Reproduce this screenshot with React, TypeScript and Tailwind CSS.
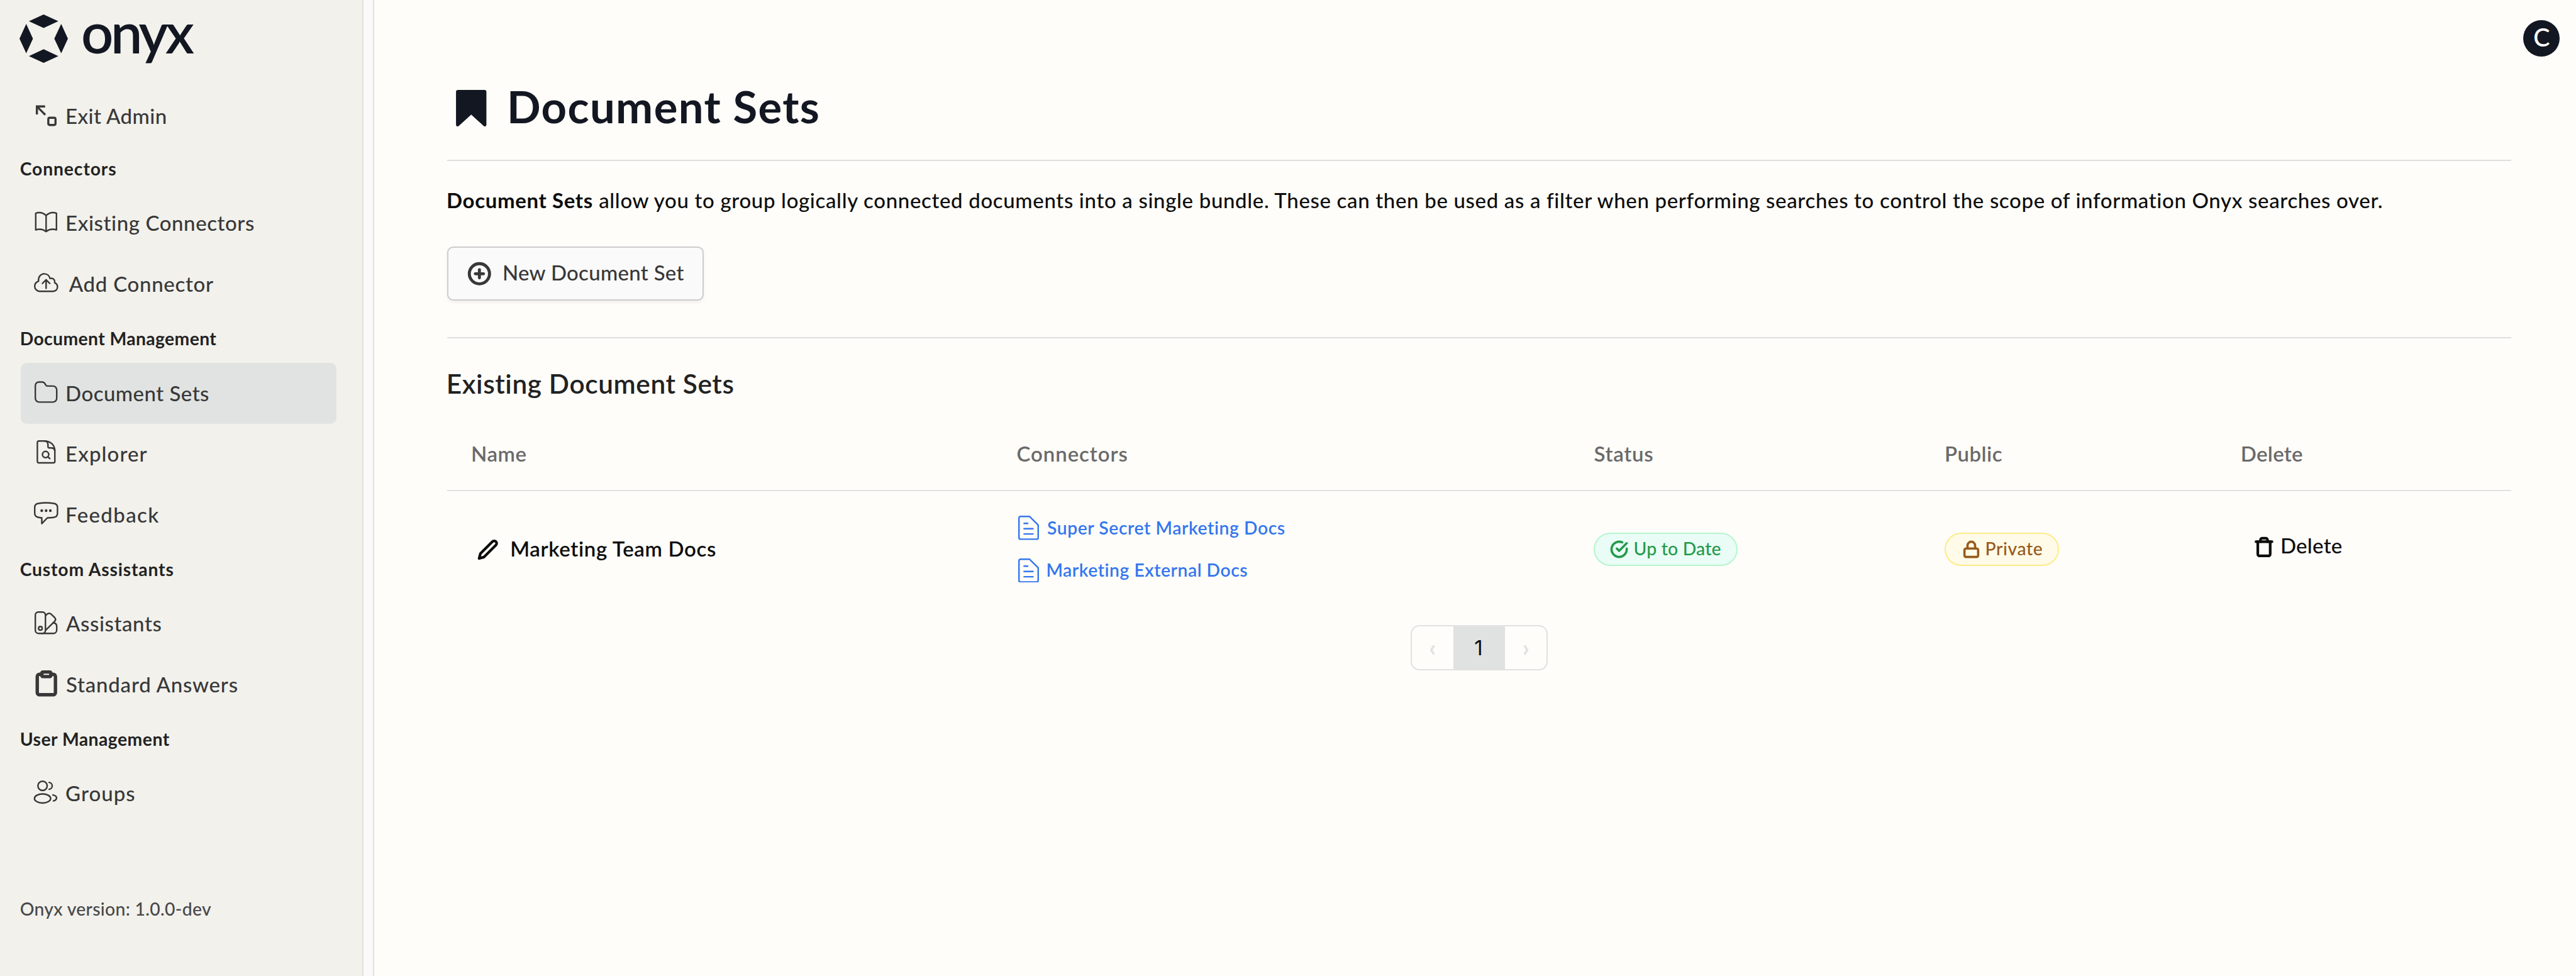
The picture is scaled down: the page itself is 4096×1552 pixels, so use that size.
import React from "react";
import { FiCheckCircle, FiClipboard, FiEdit2, FiLock, FiPlusCircle, FiTrash } from "react-icons/fi";

function LineIcon({ children, stroke = 3 }: { children: React.ReactNode; stroke?: number }) {
  return (
    <svg
      viewBox="0 0 48 48"
      fill="none"
      stroke="currentColor"
      strokeWidth={stroke}
      strokeLinecap="round"
      strokeLinejoin="round"
      className="mb-[4.8px] h-[38.6px] w-[38.6px] shrink-0 overflow-visible"
    >
      {children}
    </svg>
  );
}

const ExitIcon = () => (
  <LineIcon stroke={4.2}>
    <path d="M22 7.8H5.8V23.7M6.3 8.3L21.5 23.5" strokeLinecap="butt" strokeLinejoin="miter" />
    <path d="M20.5 22.5L21.2 23.2" />
    <rect x="28.4" y="30.2" width="14.2" height="14.2" rx="2.6" />
  </LineIcon>
);

const BookIcon = () => (
  <LineIcon>
    <path d="M3.5 6.4C10 3.9 18 5.4 24 10.8C30 5.4 38 3.9 44.5 6.4V39.3C37 36.8 30 38 24 42.5C18 38 11 36.8 3.5 39.3ZM24 11V42" />
  </LineIcon>
);

const CloudIcon = () => (
  <LineIcon>
    <path d="M11.5 41.3A10 10 0 0 1 1.5 31.3C1.5 27 4.5 22.8 9 21.2C8.2 13 13 6.7 20.3 6.7C26.5 6.7 30.7 11 31.7 16C37 14 41.5 18 41 24.3C45 26 46.5 29 46.5 32.5C46.5 37.5 43 41.3 38 41.3Z" />
    <path d="M24 35.5V18.6M16.7 25.8L24 18.5L31.3 25.8" />
  </LineIcon>
);

const FolderIcon = () => (
  <LineIcon>
    <path d="M9.7 4.3H16.5C19 4.3 20.5 5.5 22 8L23.2 10.2C24 11.8 25 12.3 27 12.3H37.5A7.5 7.5 0 0 1 45 19.8V36.5A7.5 7.5 0 0 1 37.5 44H10.2A7.5 7.5 0 0 1 2.7 36.5V11.3A7 7 0 0 1 9.7 4.3Z" />
  </LineIcon>
);

const ExplorerIcon = () => (
  <LineIcon>
    <path d="M22 1.5H9.5A2.8 2.8 0 0 0 6.7 4.3V41.9A2.8 2.8 0 0 0 9.5 44.7H38.5A2.8 2.8 0 0 0 41.3 41.9V21.5C41.3 9.5 33 1.5 20 1.5" />
    <path d="M22 1.7C26 2.5 27.7 5 27.7 9V12.5A2.8 2.8 0 0 0 30.5 15.3H34C37.5 15.3 40.5 17 41.2 21" />
    <circle cx="23" cy="28.3" r="6.2" />
    <path d="M27.6 32.8L31.4 36.4" />
  </LineIcon>
);

const FeedbackIcon = () => (
  <LineIcon>
    <path d="M9 4.3C19 2.7 29 2.7 39 4.3C43.5 5 46.5 8 46.5 12V24C46.5 28.5 43.5 31.5 39 32C34.5 32.6 30 32.9 26.5 33L15.5 44.3V32.8C13 32.6 11 32.3 9 32C4.5 31.3 1.5 28.5 1.5 24V12C1.5 8 4.5 5 9 4.3Z" />
    <g fill="currentColor" stroke="none">
      <circle cx="15.4" cy="18.7" r="2.7" />
      <circle cx="24" cy="18.7" r="2.7" />
      <circle cx="32.4" cy="18.7" r="2.7" />
    </g>
  </LineIcon>
);

const SwatchIcon = () => (
  <LineIcon>
    <rect x="2.7" y="2.7" width="20" height="42.3" rx="6" />
    <circle cx="12.7" cy="35" r="3.6" />
    <path d="M23 9.7L26 6.8C28.5 4.8 31.5 4.8 34 7L40.5 13.3C43 15.8 43 19 40.8 21.3L22.8 39" />
    <path d="M38 24.3C42.5 24.6 45 27.5 45 31V38.5A6.5 6.5 0 0 1 38.5 45H16" />
  </LineIcon>
);

const GroupsIcon = () => (
  <LineIcon>
    <circle cx="17" cy="10.7" r="9.2" />
    <ellipse cx="17" cy="35.7" rx="16" ry="9" />
    <path d="M30 3.9A6.9 6.9 0 0 1 30 17.6" />
    <path d="M37.5 28.7C42 29.7 44.7 32 44.7 34.5C44.7 37.2 42.3 39.5 38.5 40.5" />
  </LineIcon>
);

const ClipboardIcon = () => (
  <FiClipboard strokeWidth={3} className="-mx-[2.4px] mb-[4.8px] h-[43.4px] w-[43.4px] shrink-0" />
);

function NavItem({
  icon,
  label,
  tracking,
  gap = "gap-[11.6px]",
  active = false,
}: {
  icon: React.ReactNode;
  label: string;
  tracking: string;
  gap?: string;
  active?: boolean;
}) {
  return (
    <div
      className={`ml-[33px] flex h-[96.5px] w-[501.7px] items-center rounded-[9.6px] pl-[20.9px] ${gap} ${
        active ? "bg-[#e1e3e2]" : ""
      }`}
    >
      {icon}
      <span className={`mb-[1.2px] text-[33px] leading-none font-medium ${tracking}`}>{label}</span>
    </div>
  );
}

function NavHeading({ label, tracking, height = "h-[77.2px]" }: { label: string; tracking: string; height?: string }) {
  return (
    <div className={`flex items-end pb-[24.9px] pl-[31.7px] text-[28.3px] leading-none font-bold text-[#222222] ${tracking} ${height}`}>
      {label}
    </div>
  );
}

function Sidebar() {
  return (
    <aside className="flex w-[576px] shrink-0 flex-col bg-[#f2f1ec] text-[#383838]">
      <div className="flex h-[136.7px] items-start pl-[30.6px] text-[#131722]">
        <svg viewBox="0 0 288 288" fill="currentColor" className="mt-[22.5px] h-[77px] w-[77px]">
          <path d="M143.5 0L231 40L143.5 80L56 40ZM143.5 207L231 248L143.5 288L56 248ZM40 56L80 144L40 231L0 144ZM248 56L288 144L248 231L207 144Z" />
        </svg>
        <span className="-mt-[4.2px] ml-[21.5px] text-[90px] leading-[108px] font-semibold tracking-[-0.051em]">onyx</span>
      </div>
      <NavItem icon={<ExitIcon />} label="Exit Admin" tracking="tracking-[0.0127em]" />
      <NavHeading label="Connectors" tracking="tracking-[0.0316em]" height="h-[74px]" />
      <NavItem icon={<BookIcon />} label="Existing Connectors" tracking="tracking-[0.0178em]" />
      <NavItem icon={<CloudIcon />} label="Add Connector" tracking="tracking-[0.0213em]" gap="gap-[17.3px]" />
      <NavHeading label="Document Management" tracking="tracking-[0.0139em]" />
      <NavItem icon={<FolderIcon />} label="Document Sets" tracking="tracking-[0.0144em]" active />
      <NavItem icon={<ExplorerIcon />} label="Explorer" tracking="tracking-[0.0331em]" />
      <NavItem icon={<FeedbackIcon />} label="Feedback" tracking="tracking-[0.0414em]" />
      <NavHeading label="Custom Assistants" tracking="tracking-[0.0292em]" />
      <NavItem icon={<SwatchIcon />} label="Assistants" tracking="tracking-[0.0178em]" gap="gap-[12.5px]" />
      <NavItem icon={<ClipboardIcon />} label="Standard Answers" tracking="tracking-[0.0235em]" gap="gap-[12.6px]" />
      <NavHeading label="User Management" tracking="tracking-[0.017em]" />
      <NavItem icon={<GroupsIcon />} label="Groups" tracking="tracking-[0.031em]" />
      <div className="mt-auto pb-[92.4px] pl-[31.7px] text-[28.3px] leading-none font-medium tracking-[0.0117em] text-[#484848]">
        Onyx version: 1.0.0-dev
      </div>
    </aside>
  );
}

const tableColumns = "grid grid-cols-[867.5px_918px_557.5px_470.8px_1fr]";

const headers = [
  { label: "Name", tracking: "tracking-[0.0175em]" },
  { label: "Connectors", tracking: "tracking-[0.028em]" },
  { label: "Status", tracking: "tracking-[0.0207em]" },
  { label: "Public", tracking: "tracking-[0.0144em]" },
  { label: "Delete", tracking: "tracking-[0.0094em]" },
];

function ConnectorLink({ label, tracking, gap }: { label: string; tracking: string; gap: string }) {
  return (
    <a className={`flex h-[38.6px] items-center text-[#3576ee] ${gap}`}>
      <svg
        viewBox="0 0 41 48"
        fill="none"
        stroke="currentColor"
        strokeWidth="3"
        strokeLinejoin="round"
        strokeLinecap="round"
        className="h-[38.6px] w-[33px]"
      >
        <path d="M4.5 1.5H22.2L39.5 18.5V43.5A3 3 0 0 1 36.5 46.5H4.5A3 3 0 0 1 1.5 43.5V4.5A3 3 0 0 1 4.5 1.5Z" />
        <path d="M11.6 15.3H18.8M11.6 25.8H29.2M11.6 36.2H29.2" />
      </svg>
      <span className={`mb-[1.2px] text-[28.3px] leading-none font-semibold ${tracking}`}>{label}</span>
    </a>
  );
}

function DocumentSetTable() {
  return (
    <div className="mt-[73.6px]">
      <div className={`${tableColumns} border-b-2 border-[#e1e2e6] pb-[41.3px] text-[33px] leading-none font-semibold text-[#6a6a6a]`}>
        {headers.map((h) => (
          <div key={h.label} className={`pl-[38px] ${h.tracking}`}>
            {h.label}
          </div>
        ))}
      </div>
      <div className={`${tableColumns} h-[184.4px] items-center text-[#0d0d0d]`}>
        <div className="flex items-center gap-[18.1px] pl-[48.3px]">
          <FiEdit2 strokeWidth={3} className="mt-[1px] h-[33.8px] w-[33.8px]" />
          <span className="mb-[1.6px] text-[33px] leading-none font-semibold tracking-[0.0196em]">Marketing Team Docs</span>
        </div>
        <div className="flex flex-col gap-[29px] pl-[40.5px]">
          <ConnectorLink label="Super Secret Marketing Docs" tracking="tracking-[0.0201em]" gap="gap-[13px]" />
          <ConnectorLink label="Marketing External Docs" tracking="tracking-[0.0185em]" gap="gap-[11.4px]" />
        </div>
        <div className="pl-[37.2px]">
          <div className="flex h-[53px] w-[229.7px] items-center gap-[8.4px] rounded-full border-2 border-[#b6f5cf] bg-[#e9fcf5] pl-[24.5px] text-[#239a4b]">
            <FiCheckCircle strokeWidth={3} className="h-[29px] w-[29px]" />
            <span className="mb-[1.2px] text-[28.3px] leading-none font-medium tracking-[0.007em]">Up to Date</span>
          </div>
        </div>
        <div className="pl-[38.3px]">
          <div className="flex h-[53px] w-[182.2px] items-center gap-[7.8px] rounded-full border-2 border-[#feec86] bg-[#fffbe8] pl-[25.5px] text-[#985a1b]">
            <FiLock strokeWidth={3} className="h-[29px] w-[29px]" />
            <span className="mb-[1.2px] text-[28.3px] leading-none font-medium tracking-[0.0206em]">Private</span>
          </div>
        </div>
        <div className="flex items-center gap-[9.1px] pl-[58.2px]">
          <FiTrash strokeWidth={3} className="mb-[7.4px] h-[33.8px] w-[33.8px]" />
          <span className="mb-[11.4px] text-[33px] leading-none font-medium tracking-[0.0093em]">Delete</span>
        </div>
      </div>
    </div>
  );
}

function Pagination() {
  return (
    <div className="mt-[28.5px] flex h-[72.4px] w-[218.7px] self-center overflow-hidden rounded-[14px] border-2 border-[#e0e2e1]">
      <span className="flex flex-1 items-center justify-center pb-[3px] text-[38px] leading-none font-bold text-[#e0e2e1]">‹</span>
      <span className="flex w-[82px] items-center justify-center bg-[#e0e2e1] pr-[2px] font-['Inter',sans-serif] text-[33px] leading-none text-[#0d0d0d]">
        1
      </span>
      <span className="flex flex-1 items-center justify-center pb-[3px] text-[38px] leading-none font-bold text-[#e0e2e1]">›</span>
    </div>
  );
}

export default function App() {
  return (
    <div className="flex h-[1552px] w-[4096px] overflow-hidden bg-[#fefdf9] font-['Lato',sans-serif]">
      <Sidebar />
      <div className="w-[19px] shrink-0 border-x-2 border-[#e1e1e2] bg-[#fafafa]" />
      <main className="relative flex flex-1 flex-col pr-[103px] pl-[116px]">
        <div className="absolute top-[32px] right-[25.7px] flex h-[58px] w-[58px] items-center justify-center rounded-full bg-[#131722] text-[39.5px] leading-none font-medium text-white">
          <span className="mb-[4px]">C</span>
        </div>
        <div className="flex h-[254px] items-start text-[#131722]">
          <svg viewBox="0 0 60 72" fill="currentColor" className="mt-[143px] ml-[14.3px] h-[58px] w-[48.5px]">
            <path d="M4 0H56A4 4 0 0 1 60 4V68.5C60 72 56.5 73 54.5 71L30 48.7L5.5 71C3.5 73 0 72 0 68.5V4A4 4 0 0 1 4 0Z" />
          </svg>
          <h1 className="mt-[134.4px] ml-[32.2px] text-[70.7px] leading-none font-bold tracking-[0.0187em]">Document Sets</h1>
        </div>
        <div className="h-[2px] shrink-0 bg-[#dedede]" />
        <p className="mt-[46.2px] -ml-[0.9px] flex text-[33px] leading-none font-medium whitespace-nowrap text-[#0d0d0d]">
          <b className="w-[242.1px] font-bold tracking-[0.0189em]">Document Sets</b>
          <span className="tracking-[0.0196em]">
            allow you to group logically connected documents into a single bundle. These can then be used as a filter when
            performing searches to control the scope of information Onyx searches over.
          </span>
        </p>
        <button className="mt-[56.4px] flex h-[86.4px] w-[408px] items-center gap-[17.2px] rounded-[9.6px] border-2 border-[#cdcdcd] bg-[#fafafa] pl-[30.2px] text-[#383838] shadow-[0_2.4px_4.8px_rgba(0,0,0,0.06)]">
          <FiPlusCircle strokeWidth={3} className="mt-[2px] h-[38.6px] w-[38.6px]" />
          <span className="mb-[1.8px] text-[33px] leading-none font-medium tracking-[0.0088em]">New Document Set</span>
        </button>
        <div className="mt-[58px] h-[2px] shrink-0 bg-[#dedede]" />
        <h2 className="mt-[50.7px] -ml-[1.2px] text-[42.4px] leading-none font-semibold tracking-[0.0142em] text-[#222222]">
          Existing Document Sets
        </h2>
        <DocumentSetTable />
        <Pagination />
      </main>
    </div>
  );
}
